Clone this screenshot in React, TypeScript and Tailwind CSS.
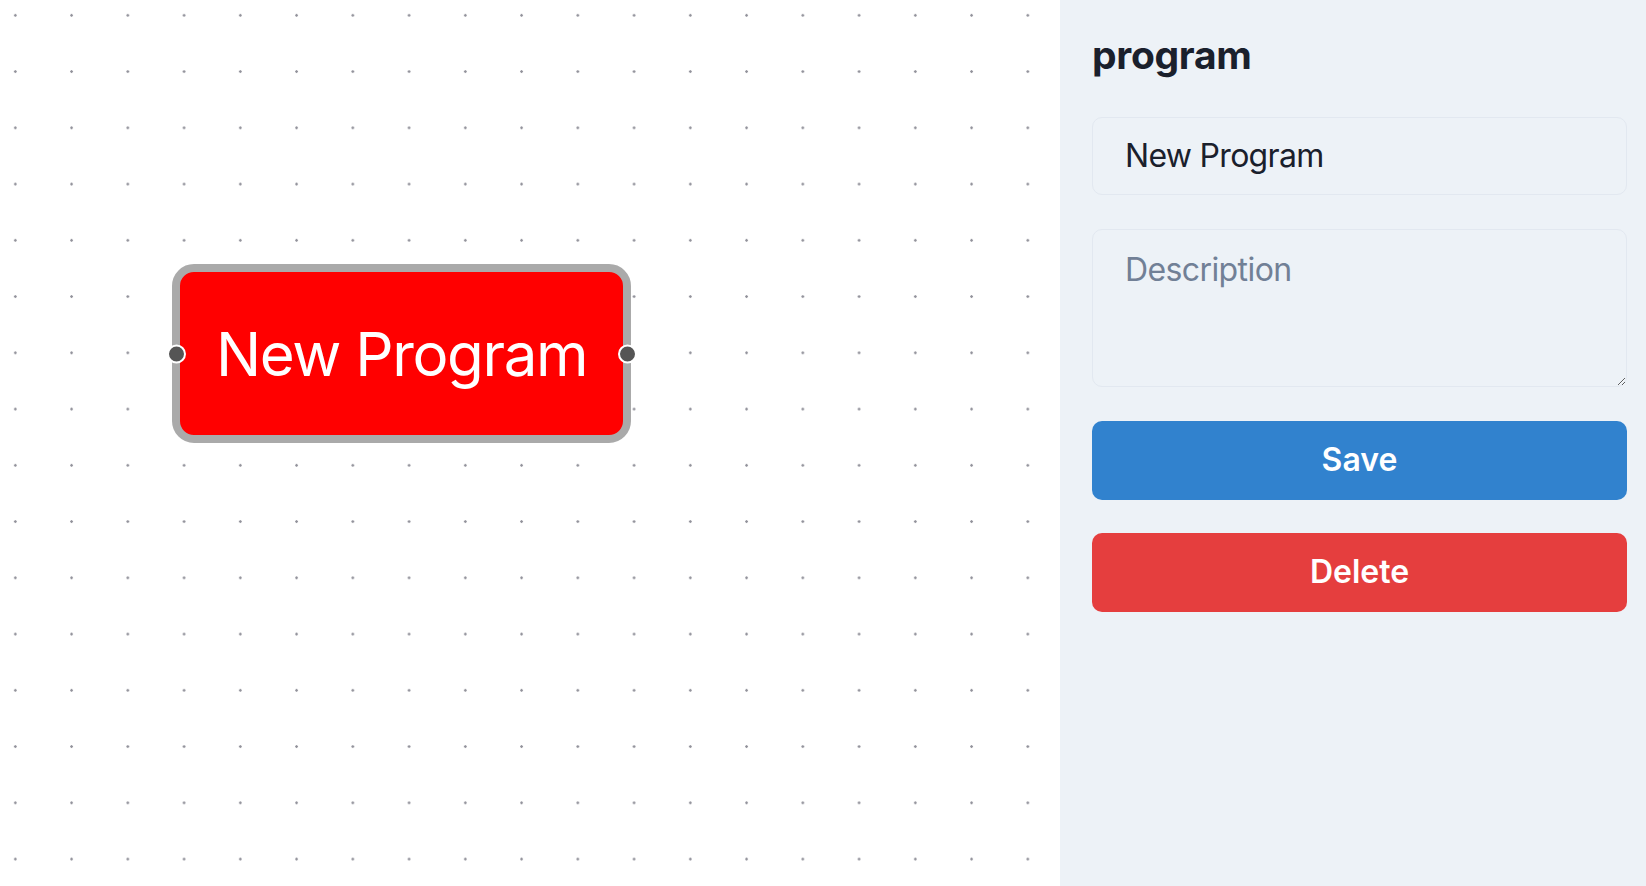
import { useState } from "react";

function ProgramNode({ label }: { label: string }) {
  return (
    <div className="absolute left-[172px] top-[264px] flex h-[179px] w-[459px] items-center justify-center rounded-[22px] border-8 border-[#aaaaaa] bg-[#ff0000]">
      <span className="text-[60px] leading-none tracking-[-1.4px] text-white">{label}</span>
      {/* handles */}
      <span className="absolute left-[-13.5px] top-1/2 h-[19px] w-[19px] -translate-y-1/2 rounded-full border-2 border-white bg-[#555555]" />
      <span className="absolute right-[-13.5px] top-1/2 h-[19px] w-[19px] -translate-y-1/2 rounded-full border-2 border-white bg-[#555555]" />
    </div>
  );
}

export default function App() {
  const [name, setName] = useState("New Program");
  const [description, setDescription] = useState("");

  return (
    <div className="flex h-screen w-full overflow-hidden font-['Inter','Noto_Sans',sans-serif]">
      {/* Canvas */}
      <div className="relative flex-1 overflow-hidden bg-white bg-[radial-gradient(circle,#91919a_1.1px,transparent_1.5px)] bg-[size:56.25px_56.25px] bg-[position:-12.8px_-12.8px]">
        <ProgramNode label={name} />
      </div>

      {/* Side panel */}
      <div className="flex w-[586px] flex-col bg-[#edf2f7] pl-8 pr-[19px] pt-[32px]">
        <h2 className="text-[39px] font-bold leading-[1.2] tracking-[-0.3px] text-[#1a202c]">program</h2>

        <input
          value={name}
          onChange={(e) => setName(e.target.value)}
          className="mt-[38px] h-[78px] w-full rounded-[10px] border border-[#e2e8f0] bg-transparent px-8 text-[32px] tracking-[-0.7px] text-[#1a202c] outline-none"
        />

        <textarea
          value={description}
          onChange={(e) => setDescription(e.target.value)}
          placeholder="Description"
          className="mt-[34px] h-[158px] w-full rounded-[10px] border border-[#e2e8f0] bg-transparent px-8 pt-4 text-[32px] leading-[48px] tracking-[-0.6px] text-[#1a202c] outline-none placeholder:text-[#718096]"
        />

        <button className="mt-[34px] h-[79px] w-full rounded-[10px] bg-[#3182ce] text-[32px] font-semibold text-white">
          Save
        </button>
        <button className="mt-[33px] h-[79px] w-full rounded-[10px] bg-[#e53e3e] text-[32px] font-semibold text-white">
          Delete
        </button>
      </div>
    </div>
  );
}
